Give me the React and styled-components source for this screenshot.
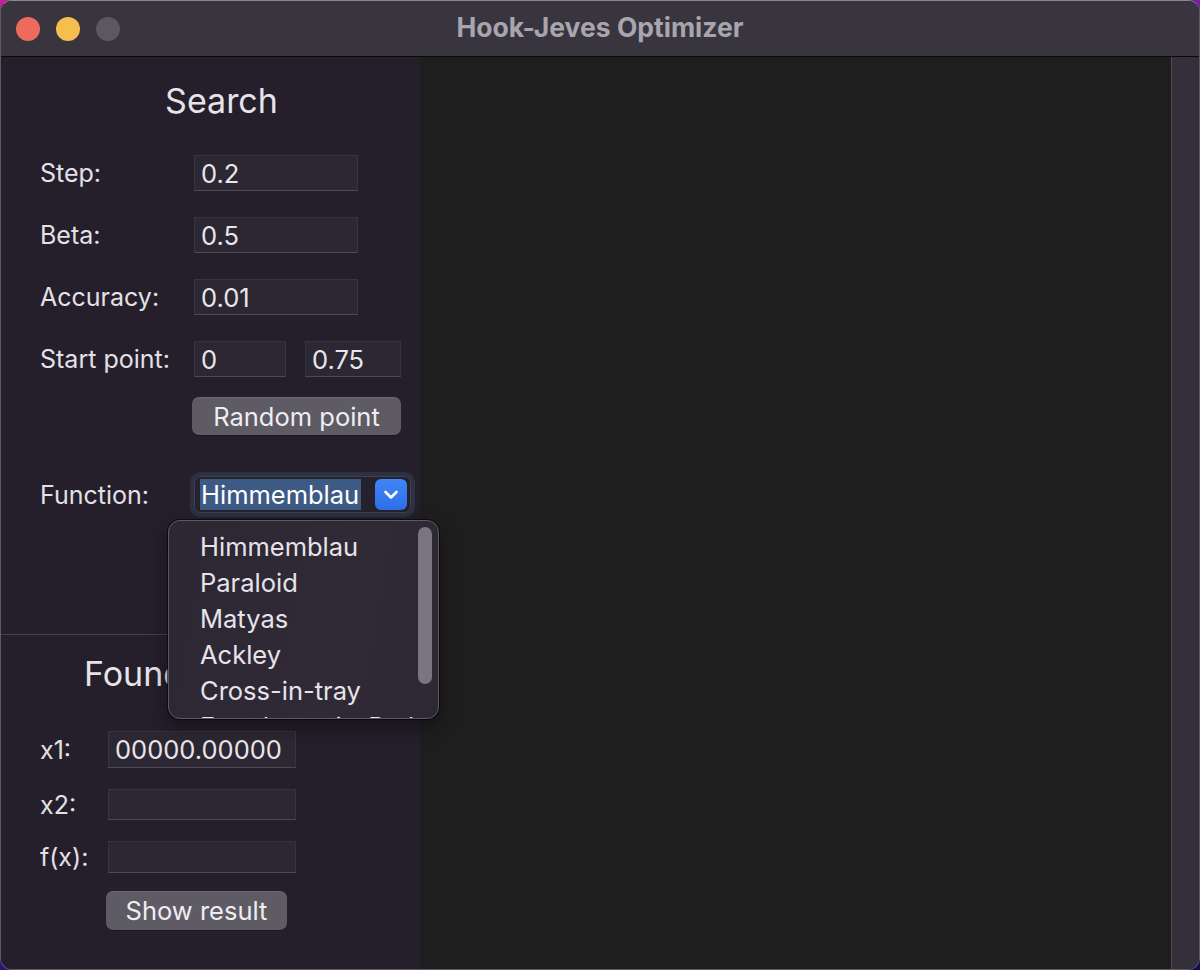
import React from 'react'
import styled, { createGlobalStyle } from 'styled-components'

const GlobalStyle = createGlobalStyle`
  html, body {
    margin: 0;
    padding: 0;
    width: 1200px;
    height: 970px;
    overflow: hidden;
    background: linear-gradient(160deg, #c0209a 0%, #5a1ca8 45%, #1a1470 75%, #0f0d55 100%);
    font-family: Inter, "Noto Sans", "Liberation Sans", sans-serif;
  }
`

const functions = ['Himmemblau', 'Paraloid', 'Matyas', 'Ackley', 'Cross-in-tray', 'Freudenstein-Roth']

const App = () => {
  return (
    <>
      <GlobalStyle />
      <Window>
        <TitleBar>
          <Lights>
            <Light $color="#ee6a5f" />
            <Light $color="#f5be4f" />
            <Light $color="#5c5862" />
          </Lights>
          <Title>Hook-Jeves Optimizer</Title>
          <div />
        </TitleBar>
        <Main>
          <Sidebar>
            <SearchSection>
              <Heading $shift={22}>Search</Heading>
              <FormGrid>
                <Label>Step:</Label>
                <Field value="0.2" readOnly $width={164} />
                <Label>Beta:</Label>
                <Field value="0.5" readOnly $width={164} />
                <Label>Accuracy:</Label>
                <Field value="0.01" readOnly $width={164} />
                <Label>Start point:</Label>
                <PairRow>
                  <Field value="0" readOnly $width={92} />
                  <Field value="0.75" readOnly $width={96} />
                </PairRow>
              </FormGrid>
              <ActionButton $width={209} $offset={152} $height={38}>Random point</ActionButton>
              <FunctionRow>
                <Label $width={150}>Function:</Label>
                <SelectRing>
                  <SelectBox>
                    <Selected>Himmemblau</Selected>
                    <ArrowButton>
                      <svg width="32" height="31" viewBox="0 0 32 31">
                        <polyline
                          points="10.5,13 16,18.5 21.5,13"
                          fill="none"
                          stroke="#fff"
                          strokeWidth="2.6"
                          strokeLinecap="round"
                          strokeLinejoin="round"
                        />
                      </svg>
                    </ArrowButton>
                  </SelectBox>
                  <Popup>
                    {functions.map((name) => (
                      <PopupItem key={name}>{name}</PopupItem>
                    ))}
                    <ScrollThumb />
                  </Popup>
                </SelectRing>
              </FunctionRow>
            </SearchSection>
            <FoundSection>
              <Heading $left={83}>Found point</Heading>
              <ResultGrid>
                <Label>x1:</Label>
                <Field value="00000.00000" readOnly $width={188} $height={37} />
                <Label>x2:</Label>
                <Field value="" readOnly $width={188} $height={31} />
                <Label>f(x):</Label>
                <Field value="" readOnly $width={188} $height={32} />
              </ResultGrid>
              <ActionButton $width={181} $offset={66} $height={39} $top={18}>
                Show result
              </ActionButton>
            </FoundSection>
          </Sidebar>
          <Canvas />
          <Strip />
        </Main>
      </Window>
    </>
  )
}

const Window = styled.div`
  width: 1200px;
  height: 970px;
  box-sizing: border-box;
  border: 1px solid #5e5a64;
  border-top-color: #8a8790;
  border-radius: 12px;
  overflow: hidden;
  display: flex;
  flex-direction: column;
  background-color: #241f2b;
`

const TitleBar = styled.div`
  height: 56px;
  flex: none;
  box-sizing: border-box;
  border-bottom: 1px solid #09080b;
  background-color: #38353f;
  display: grid;
  grid-template-columns: 1fr auto 1fr;
  align-items: center;
`

const Lights = styled.div`
  display: flex;
  gap: 16px;
  padding-left: 15px;
  padding-top: 1px;
`

const Light = styled.span`
  width: 24px;
  height: 24px;
  border-radius: 50%;
  background-color: ${(props) => props.$color};
`

const Title = styled.div`
  font-size: 26.5px;
  font-weight: 700;
  color: #a8a5ae;
  margin-top: -3px;
`

const Main = styled.div`
  flex: 1;
  display: flex;
  min-height: 0;
`

const Sidebar = styled.div`
  width: 419px;
  flex: none;
  display: flex;
  flex-direction: column;
  background-color: #241f2b;
  color: #e3e1e6;
`

const SearchSection = styled.div`
  height: 577px;
  box-sizing: border-box;
  padding: 24px 0 0 39px;
  position: relative;
  z-index: 2;
`

const FoundSection = styled.div`
  border-top: 1px solid #45404c;
  padding: 19px 0 0 39px;
`

const Heading = styled.div`
  font-size: 34px;
  line-height: 40px;
  color: #e6e4e9;
  text-align: ${(props) => (props.$left ? 'left' : 'center')};
  margin-left: ${(props) => (props.$left ? props.$left - 39 : -39)}px;
  padding-left: ${(props) => props.$shift || 0}px;
  white-space: nowrap;
`

const FormGrid = styled.div`
  display: grid;
  grid-template-columns: 154px auto;
  row-gap: 26px;
  align-items: center;
  margin-top: 34px;
`

const ResultGrid = styled.div`
  display: grid;
  grid-template-columns: 68px auto;
  row-gap: 21px;
  align-items: center;
  margin-top: 37px;
`

const Label = styled.span`
  font-size: 25px;
  color: #e3e1e6;
  width: ${(props) => (props.$width ? `${props.$width}px` : 'auto')};
  flex: none;
`

const Field = styled.input`
  box-sizing: border-box;
  width: ${(props) => props.$width}px;
  height: ${(props) => props.$height || 36}px;
  background-color: #2c2833;
  border: 1px solid #38343f;
  border-bottom-color: #4e4a55;
  color: #e8e6eb;
  font-family: inherit;
  font-size: 25.5px;
  padding: 0 6px;
  outline: none;
  margin: 0;
`

const PairRow = styled.div`
  display: flex;
  gap: 19px;
`

const ActionButton = styled.button`
  display: block;
  box-sizing: border-box;
  width: ${(props) => props.$width}px;
  height: ${(props) => props.$height}px;
  margin: ${(props) => props.$top || 20}px 0 0 ${(props) => props.$offset}px;
  border: none;
  border-radius: 7px;
  background-color: #5f5b65;
  box-shadow: 0 1px 0 rgba(0, 0, 0, 0.25), inset 0 1px 0 rgba(255, 255, 255, 0.08);
  color: #eeedf0;
  font-family: inherit;
  font-size: 25.5px;
  padding: 0;
`

const FunctionRow = styled.div`
  display: flex;
  align-items: center;
  margin-top: 37px;
`

const SelectRing = styled.div`
  position: relative;
  padding: 4px;
  border-radius: 10px;
  background-color: #2c3040;
`

const SelectBox = styled.div`
  width: 217px;
  height: 37px;
  box-sizing: border-box;
  display: flex;
  align-items: center;
  justify-content: space-between;
  padding: 0 3px 0 5px;
  border: 1px solid #3e4252;
  border-radius: 7px;
  background-color: #25222d;
`

const Selected = styled.span`
  font-size: 25.5px;
  line-height: 31px;
  color: #ffffff;
  background-color: #3c5a84;
  padding: 0 2px 0 1px;
`

const ArrowButton = styled.span`
  width: 32px;
  height: 31px;
  border-radius: 6px;
  background: linear-gradient(#3f86f8, #2f6ee6);
  display: flex;
  align-items: center;
  justify-content: center;
`

const Popup = styled.div`
  position: absolute;
  left: -22px;
  top: 48px;
  width: 271px;
  height: 199px;
  box-sizing: border-box;
  overflow: hidden;
  padding-top: 8px;
  border: 1px solid #5d5863;
  border-radius: 12px;
  background: linear-gradient(100deg, #2c2733 0%, #2f2a36 60%, #2d2834 100%);
  box-shadow: 0 0 0 1px rgba(0, 0, 0, 0.6), 0 8px 20px rgba(0, 0, 0, 0.4);
`

const PopupItem = styled.div`
  font-size: 25.5px;
  line-height: 36px;
  padding-left: 31px;
  color: #e6e4e9;
  white-space: nowrap;
`

const ScrollThumb = styled.div`
  position: absolute;
  right: 6px;
  top: 6px;
  width: 14px;
  height: 157px;
  border-radius: 7px;
  background-color: #7a7582;
`

const Canvas = styled.div`
  flex: 1;
  background-color: #1e1e1e;
`

const Strip = styled.div`
  width: 27px;
  flex: none;
  border-left: 1px solid #4e4954;
  background-color: #342f3b;
`

export default App
